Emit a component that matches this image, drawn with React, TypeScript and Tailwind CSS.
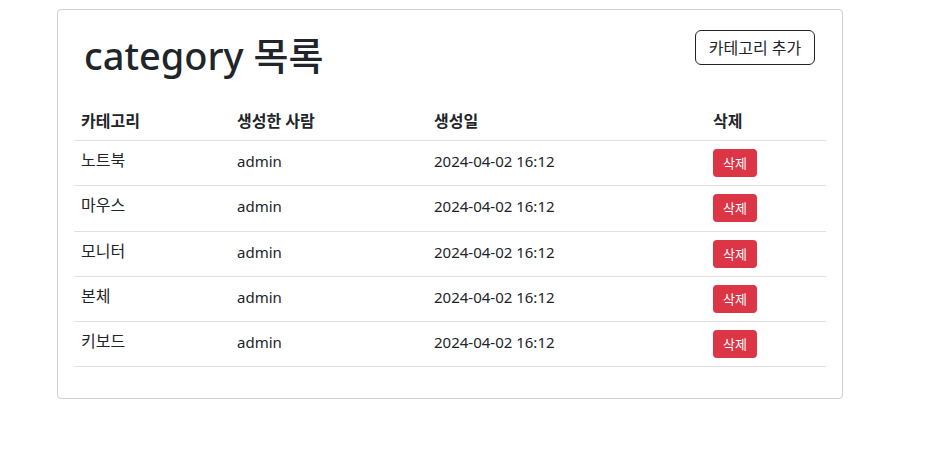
import React from "react";

const rows = ["노트북", "마우스", "모니터", "본체", "키보드"];

export default function App() {
  return (
    <div
      className="min-h-[449px] bg-white text-[#212529]"
      style={{ fontFamily: '"Noto Sans", "Noto Sans CJK KR", sans-serif' }}
    >
      <div className="ml-[57px] pt-[9px] w-[786px]">
        <div className="border border-[#cfcfcf] rounded-[4px] px-[16px] pt-[20px] pb-[31px]">
          <div className="flex justify-between items-start pl-[10px] pr-[11px] mb-[23px]">
            <h1 className="mt-[1px] text-[38px] leading-[48px] font-medium text-[#212529]">category 목록</h1>
            <button className="h-[35px] w-[120px] border border-[#212529] rounded-[6px] text-[16px] text-[#212529] bg-white">
              카테고리 추가
            </button>
          </div>
          <table className="w-full table-fixed border-collapse text-[15px]">
            <colgroup>
              <col className="w-[155px]" />
              <col className="w-[197px]" />
              <col className="w-[279px]" />
              <col className="w-[121px]" />
            </colgroup>
            <thead>
              <tr className="border-b border-[#dee2e6] text-[16px]">
                <th className="text-left font-bold pl-[7px] py-[7px] leading-[24px]">카테고리</th>
                <th className="text-left font-bold pl-[8px] py-[7px] leading-[24px]">생성한 사람</th>
                <th className="text-left font-bold pl-[8px] py-[7px] leading-[24px]">생성일</th>
                <th className="text-left font-bold pl-[8px] py-[7px] leading-[24px]">삭제</th>
              </tr>
            </thead>
            <tbody>
              {rows.map((r, i) => (
                <tr key={r} className="border-b border-[#dee2e6]">
                  <td className="align-top pl-[7px] py-[8px] leading-[22px] text-[16px]">{r}</td>
                  <td className="align-top pl-[8px] py-[8px] leading-[24px]">admin</td>
                  <td className="align-top pl-[8px] py-[8px] leading-[24px]">2024-04-02 16:12</td>
                  <td className={`align-top pl-[8px] ${i === 1 ? "pt-[8px] pb-[9px]" : "py-[8px]"}`}>
                    <button className="h-[28px] w-[44px] rounded-[4px] bg-[#dc3545] text-white text-[13px] leading-[28px]">
                      삭제
                    </button>
                  </td>
                </tr>
              ))}
            </tbody>
          </table>
        </div>
      </div>
    </div>
  );
}
